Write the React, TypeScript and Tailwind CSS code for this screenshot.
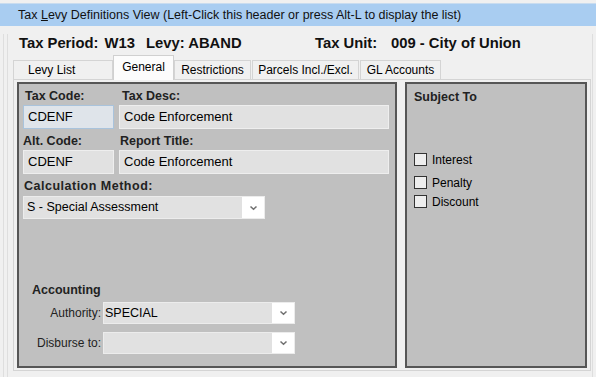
import React from "react";

const Chevron = () => (
  <svg width="9" height="6" viewBox="0 0 9 6" className="block">
    <polyline
      points="1.5,1.5 4.5,4.3 7.5,1.5"
      fill="none"
      stroke="#707070"
      strokeWidth="1.5"
    />
  </svg>
);

const Select = ({
  value,
  className,
  textPad,
}: {
  value: string;
  className: string;
  textPad: string;
}) => (
  <div className={`flex bg-white border border-[#ececec] ${className}`}>
    <div className={`flex-1 bg-[#e1e1e1] flex items-center text-[12.5px] ${textPad}`}>
      {value}
    </div>
    <div className="w-[22px] flex items-center justify-center">
      <Chevron />
    </div>
  </div>
);

const Field = ({
  value,
  className,
  focused,
}: {
  value: string;
  className: string;
  focused?: boolean;
}) => (
  <div
    className={`h-[24px] flex items-center pl-[4px] text-[13px] border ${
      focused
        ? "bg-[#dfe4ea] border-[#a9c3dc]"
        : "bg-[#e1e1e1] border-[#eeeeee]"
    } ${className}`}
  >
    {value}
  </div>
);

const Check = ({ label, className }: { label: string; className: string }) => (
  <div className={`flex items-center h-[13px] ${className}`}>
    <div className="w-[13px] h-[13px] bg-[#eeeeee] border border-[#333]" />
    <span className="ml-[5px] text-[12px] leading-none">{label}</span>
  </div>
);

const Tab = ({ label, className }: { label: string; className: string }) => (
  <div
    className={`h-[19px] flex items-center text-[12px] bg-[#f0f0f0] border border-b-0 border-[#d4d4d4] ${className}`}
  >
    {label}
  </div>
);

export default function App() {
  return (
    <div className="w-[596px] h-[377px] bg-[#f0f0f0] overflow-hidden font-['Liberation_Sans',Arial,sans-serif] text-black">
      <div className="pt-[3px]">
        <div className="h-[23px] bg-[#a9cdf1] border-t border-[#c9dcef] flex items-center pl-[18px] text-[12.5px] text-[#111]">
          <span>
            Tax <span className="underline">L</span>evy Definitions View (Left-Click this header or
            press Alt-L to display the list)
          </span>
        </div>
      </div>

      <div className="ml-[3px] mr-[3px] border-l border-r border-[#dedede] h-[351px]">
        <div className="ml-[3px] border-l border-[#dedede] h-full">
          {/* title row */}
          <div className="flex items-center h-[18px] mt-[8px] pl-[11px] text-[14.8px] font-bold text-[#111]">
            <span className="w-[127px]">
              Tax Period:<span className="ml-[6px]">W13</span>
            </span>
            <span className="w-[169px]">Levy: ABAND</span>
            <span className="w-[76px]">Tax Unit:</span>
            <span>009 - City of Union</span>
          </div>

          {/* tabs */}
          <div className="flex items-end h-[24px] mt-[3px] pl-[5px] relative z-10">
            <Tab label="Levy List" className="w-[100px] pl-[14px]" />
            <div className="w-[61px] h-[25px] mb-[-1px] bg-[#fcfcfc] border border-b-0 border-[#d0d0d0] flex items-center justify-center pb-[3px] text-[12px]">
              General
            </div>
            <Tab label="Restrictions" className="w-[77px] justify-center" />
            <Tab label="Parcels Incl./Excl." className="w-[107px] justify-center ml-[1px]" />
            <Tab label="GL Accounts" className="w-[81px] justify-center ml-[1px]" />
          </div>

          {/* tab content */}
          <div className="ml-[5px] mr-[1px] h-[292px] border border-[#d4d4d4] pl-[3px] pt-[2px] flex gap-[8px]">
            {/* left panel */}
            <div className="w-[380px] h-[286px] bg-[#c0c0c0] border-2 border-[#565656] flex flex-col">
              <div className="flex pl-[4px] pt-[5px] gap-[5px]">
                <div className="w-[91px]">
                  <div className="h-[14px] leading-[14px] pl-[2px] text-[12.5px] font-bold text-[#222]">
                    Tax Code:
                  </div>
                  <Field value="CDENF" focused className="mt-[2px]" />
                  <div className="h-[14px] leading-[14px] mt-[5px] text-[12.5px] font-bold text-[#222]">
                    Alt. Code:
                  </div>
                  <Field value="CDENF" className="mt-[2px]" />
                </div>
                <div className="w-[270px]">
                  <div className="h-[14px] leading-[14px] pl-[3px] text-[12.5px] font-bold text-[#222]">
                    Tax Desc:
                  </div>
                  <Field value="Code Enforcement" className="mt-[2px]" />
                  <div className="h-[14px] leading-[14px] mt-[5px] pl-[1px] text-[12.5px] font-bold text-[#222]">
                    Report Title:
                  </div>
                  <Field value="Code Enforcement" className="mt-[2px]" />
                </div>
              </div>

              <div className="pl-[5px] mt-[5px] h-[14px] leading-[14px] text-[12.5px] tracking-[0.5px] font-bold text-[#222]">
                Calculation Method:
              </div>
              <div className="pl-[4px] mt-[3px]">
                <Select
                  value="S - Special Assessment"
                  className="w-[242px] h-[23px]"
                  textPad="pl-[3px]"
                />
              </div>

              <div className="pl-[13px] mt-[64px] h-[14px] leading-[14px] text-[12.5px] font-bold text-[#222]">
                Accounting
              </div>
              <div className="flex items-center mt-[5px]">
                <div className="w-[84px] text-right pr-[2px] text-[12px] text-[#222]">
                  Authority:
                </div>
                <Select value="SPECIAL" className="w-[192px] h-[22px]" textPad="pl-[1px]" />
              </div>
              <div className="flex items-center mt-[8px]">
                <div className="w-[84px] text-right pr-[2px] text-[12px] text-[#222]">
                  Disburse to:
                </div>
                <Select value="" className="w-[192px] h-[22px]" textPad="pl-[1px]" />
              </div>
            </div>

            {/* right panel */}
            <div className="w-[182px] h-[286px] bg-[#c0c0c0] border-2 border-[#565656] pl-[7px] pt-[6px]">
              <div className="h-[14px] leading-[14px] text-[12.5px] font-bold text-[#222]">
                Subject To
              </div>
              <Check label="Interest" className="mt-[49px]" />
              <Check label="Penalty" className="mt-[10px]" />
              <Check label="Discount" className="mt-[6px]" />
            </div>
          </div>
        </div>
      </div>
    </div>
  );
}
